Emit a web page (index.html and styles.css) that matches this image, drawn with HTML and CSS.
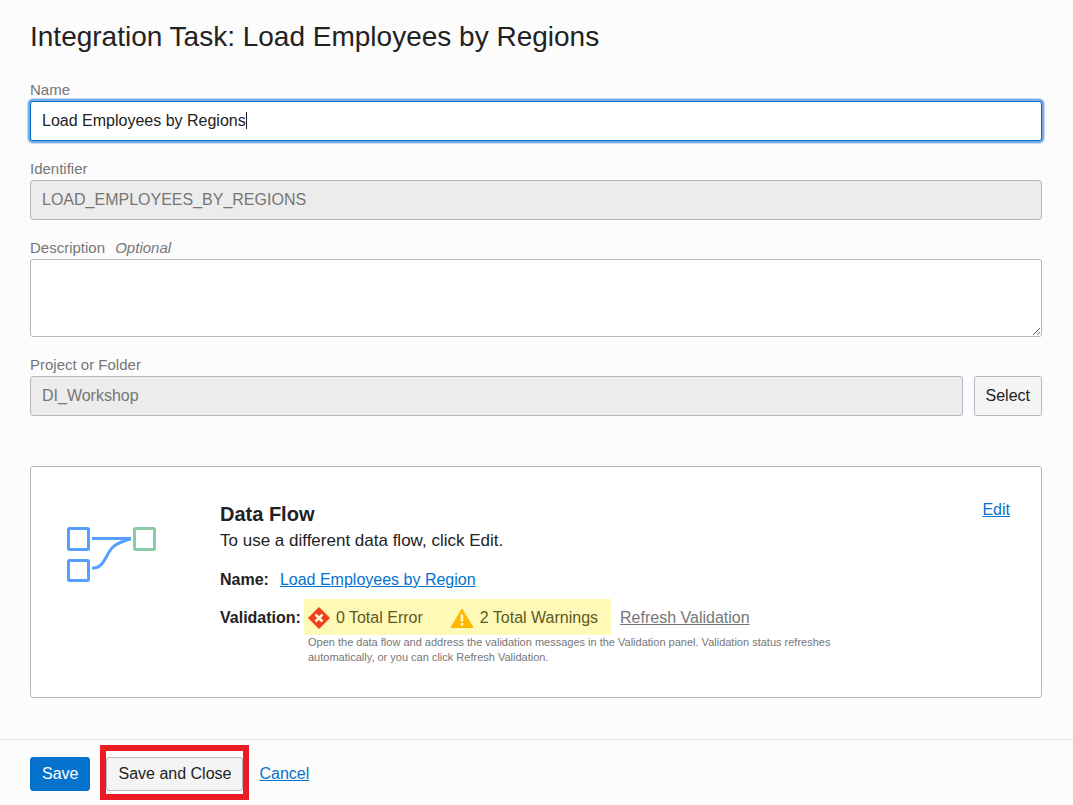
FILE: index.html
```html
<!DOCTYPE html>
<html lang="en">
<head>
<meta charset="utf-8">
<title>Integration Task: Load Employees by Regions</title>
<link rel="stylesheet" href="styles.css">
</head>
<body>
<form class="page">
  <main class="content">
    <h1 class="title">Integration Task: Load Employees by Regions</h1>

    <div class="fields">
      <div class="field">
        <label class="label" for="name">Name</label>
        <div class="caret-box">
          <input class="input input-active" id="name" type="text" value="Load Employees by Regions" autocomplete="off" spellcheck="false">
          <span class="caret"></span>
        </div>
      </div>
      <div class="field">
        <label class="label" for="identifier">Identifier</label>
        <input class="input" id="identifier" type="text" value="LOAD_EMPLOYEES_BY_REGIONS" disabled>
      </div>
      <div class="field">
        <label class="label" for="description">Description <em class="optional">Optional</em></label>
        <textarea class="input textarea" id="description"></textarea>
      </div>
      <div class="field">
        <label class="label" for="folder">Project or Folder</label>
        <div class="picker">
          <input class="input" id="folder" type="text" value="DI_Workshop" disabled>
          <button class="button button-tall" type="button">Select</button>
        </div>
      </div>
    </div>

    <section class="card">
      <svg class="flow-icon" width="90" height="56" viewBox="0 0 90 56" fill="none" stroke="#559fff" stroke-width="3" aria-hidden="true">
        <rect x="1.5" y="1.5" width="20" height="21" rx="1"/>
        <rect x="1.5" y="33.5" width="20" height="20" rx="1"/>
        <rect x="67.5" y="1.5" width="20" height="21" rx="1" stroke="#89cba2"/>
        <path d="M25 11.5H64M25 41C37 42 38 28 46 20C50 16 57 14 64 11.5"/>
      </svg>
      <div class="details">
        <h2 class="card-title">Data Flow</h2>
        <p class="hint">To use a different data flow, click Edit.</p>
        <div class="row row-name">
          <strong>Name:</strong>
          <a class="link" href="#flow">Load Employees by Region</a>
        </div>
        <div class="row row-validation">
          <strong>Validation:</strong>
          <div class="status">
            <span class="count">
              <svg width="22" height="22" viewBox="0 0 22 22" aria-hidden="true">
                <path d="M11 0.5L21.5 11L11 21.5L0.5 11Z" fill="#ee3f1b" stroke="#ee3f1b" stroke-linejoin="round"/>
                <path d="M7.5 7.5L14.5 14.5M14.5 7.5L7.5 14.5" stroke="#fff7d8" stroke-width="2.5"/>
              </svg>
              0 Total Error
            </span>
            <span class="count">
              <svg width="24" height="20" viewBox="0 0 24 20" aria-hidden="true">
                <path d="M12 1L23 19.5H1Z" fill="#ffb800" stroke="#ffb800" stroke-linejoin="round"/>
                <path d="M12 6.5V13.5M12 15V17.5" stroke="#fff7d0" stroke-width="2.5"/>
              </svg>
              2 Total Warnings
            </span>
          </div>
          <a class="link link-muted" href="#refresh">Refresh Validation</a>
        </div>
        <p class="note">Open the data flow and address the validation messages in the Validation panel. Validation status refreshes automatically, or you can click Refresh Validation.</p>
      </div>
      <a class="link" href="#edit">Edit</a>
    </section>
  </main>

  <footer class="footer">
    <button class="button button-primary" type="button">Save</button>
    <span class="highlight"><button class="button" type="button">Save and Close</button></span>
    <a class="link" href="#cancel">Cancel</a>
  </footer>
</form>
</body>
</html>
```

FILE: styles.css
```css
* { box-sizing: border-box; }

body {
  margin: 0;
  background: #fcfcfc;
  color: #222;
  font: 16px/20px "Liberation Sans", Arial, sans-serif;
}

.content { padding: 21px 31px 41px 30px; }

.title {
  margin: 0 0 28px;
  font-size: 28px;
  font-weight: 400;
  line-height: 32px;
}

.fields {
  display: flex;
  flex-direction: column;
  gap: 19px;
}

.field {
  display: flex;
  flex-direction: column;
}

.label {
  margin-bottom: 2px;
  color: #767676;
  font-size: 15px;
  line-height: 18px;
}

.optional { margin-left: 6px; }

.input {
  display: block;
  width: 100%;
  height: 40px;
  padding: 0 11px;
  border: 1px solid #b1b8c4;
  border-radius: 3px;
  outline: 0;
  background: #fff;
  color: #222;
  font: inherit;
}

.input:disabled {
  background: #ececec;
  color: #767676;
}

.input-active {
  border-color: #0572ce;
  box-shadow: 0 0 0 2px #74a9e6, 0 0 1px 3px #c5daf3;
  caret-color: transparent;
}

.caret-box { position: relative; }

.caret {
  position: absolute;
  top: 11px;
  left: 216px;
  width: 1px;
  height: 17px;
  background: #222;
}

.textarea {
  height: 78px;
  padding: 8px 11px;
  resize: vertical;
}

.picker {
  display: flex;
  gap: 11px;
}

.picker .input { flex: 1; }

.button {
  height: 34px;
  padding: 0 11px;
  border: 1px solid #b1b8c4;
  border-radius: 3px;
  background: #f4f4f4;
  color: #222;
  font: inherit;
  white-space: nowrap;
}

.button-tall { height: 40px; }

.button-primary {
  border-color: #0572ce;
  background: #0572ce;
  color: #fff;
}

.card {
  display: flex;
  align-items: flex-start;
  margin-top: 50px;
  padding: 33px 31px 32px 36px;
  border: 1px solid #b1b8c4;
  border-radius: 3px;
  background: #fff;
}

.flow-icon {
  flex: none;
  margin: 27px 63px 0 0;
}

.details {
  flex: 1;
  min-width: 0;
}

.card-title {
  margin: 0;
  font-size: 20px;
  line-height: 28px;
}

.hint {
  margin: 0;
  font-size: 17px;
  line-height: 26px;
}

.row {
  display: flex;
  align-items: center;
}

.row-name {
  gap: 11px;
  margin: 16px 0 9px;
}

.row-validation { gap: 3px; }

.row-validation > * { padding-top: 2px; }

.status {
  display: flex;
  gap: 27px;
  height: 36px;
  margin-right: 6px;
  padding-right: 13px;
  padding-left: 4px;
  background: #fff9b8;
  color: #5c591f;
}

.count {
  display: flex;
  align-items: center;
  gap: 6px;
}

.link { color: #0572ce; }

.link-muted { color: #767676; }

.note {
  max-width: 630px;
  margin: 0;
  padding-left: 88px;
  color: #767676;
  font-size: 11px;
  line-height: 15px;
}

.footer {
  display: flex;
  align-items: center;
  gap: 16px;
  padding: 17px 30px 14px;
  border-top: 1px solid #e4e4e4;
}

.highlight {
  position: relative;
  display: flex;
}

.highlight::after {
  position: absolute;
  inset: -12px -6px -9px;
  border: 6px solid #ed1c24;
  content: "";
  pointer-events: none;
}
```
